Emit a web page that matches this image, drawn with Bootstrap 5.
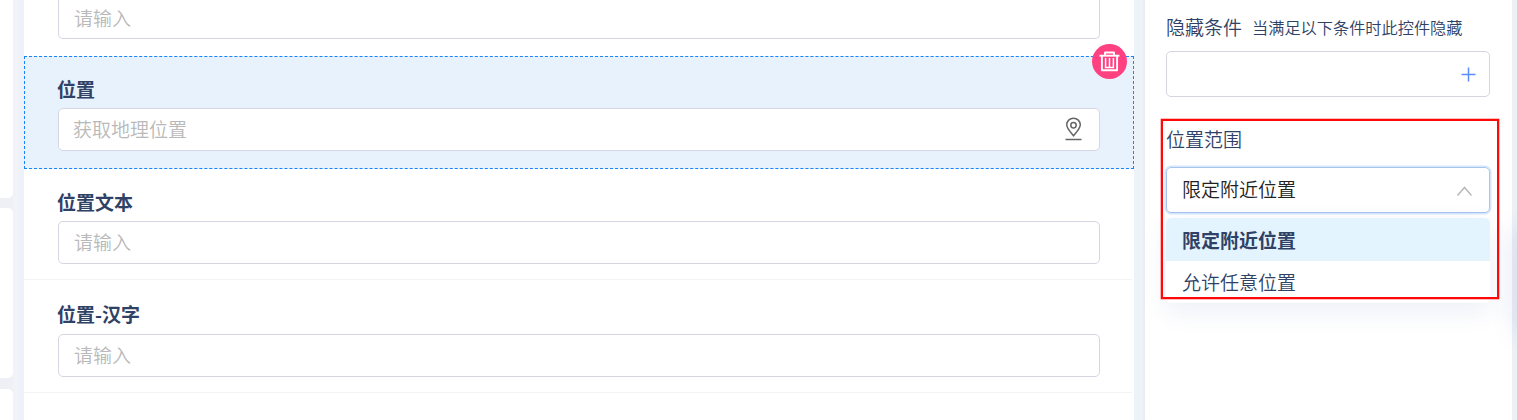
<!DOCTYPE html>
<html lang="zh-CN">
<head>
<meta charset="utf-8">
<meta name="viewport" content="width=device-width, initial-scale=1">
<title>表单设计</title>
<link href="https://cdn.jsdelivr.net/npm/bootstrap@5.3.0/dist/css/bootstrap.min.css" rel="stylesheet">
<style>
body{height:420px;overflow:hidden;background:#eef2f9;font-family:"Noto Sans CJK SC",sans-serif;font-size:19px;line-height:28px;color:#2f4266}
.palette{width:24px;gap:10px;background:linear-gradient(90deg,#eef0f5 0 13px,#f2f3f9 13px 19px,#edf2fa 19px)}
.palette div{width:13px;background:#fff;border-radius:0 5px 5px 0}
.p1{height:198px;border-top-right-radius:0!important}.p2{height:170px}.p3{height:40px;margin-top:1px}
.canvas{width:1110px}
.item{height:113px;padding:19px 34px 0}
.item-line{height:111px;margin:0 2px 2px 0;padding-right:32px;border-bottom:1px solid #f2f3f6}
.item-first{height:56px;padding-top:0}
.item-first .box{height:39px;border-top:0;border-radius:0 0 5px 5px;padding-bottom:3px}
.item-on{background:#e8f2fd;border:1px dashed #1684fc;padding:18px 33px 0}
.title{height:33px;margin-left:-1px;font-weight:700}
.item-line:last-child .title{position:static;margin-top:-1px;height:34px}
.box{height:43px;border:1px solid #d5d6e2;border-radius:5px;padding:0 16px 1px 15px;background:#fff;color:#b9b9b9;font-weight:350}
.box-place{padding-left:14px}
.del{width:35px;height:35px;top:-13px;right:6px;background:#ff4081}
.gutter{width:11px;background:linear-gradient(90deg,#eef2f9 0 7px,#e8ebf3)}
.props{width:367px;padding:13px 22px 0 21px;font-weight:350}
.hint{font-size:16.2px;margin-left:10px}
.box-add{height:46px;margin-top:10px;padding:0 13px 0 0}
.range-label{margin-top:28px}
.mark-frame{left:16px;top:119px;width:338px;height:180px;border:2px solid #ff0808;box-shadow:0 0 0 .5px #ff7777;z-index:3}
.picker{height:46px;margin-top:14px;border:1px solid #a8c5ee;border-radius:5px;box-shadow:0 0 0 1.5px #d5e7fb;padding:0 17px 2px 15px;color:#222}
.options{margin-top:5px;height:85px;border-radius:5px;box-shadow:0 8px 26px rgba(50,80,170,.09)}
.opt{height:41px;padding:0 16px}
.opt-on{height:43px;background:#e4f4fe;font-weight:700;border-radius:5px 5px 0 0}
.edge{width:5px;background:#edf0f6;position:relative}
.edge::after{content:"";position:absolute;left:5px;top:230px;width:20px;height:100px;box-shadow:0 0 26px rgba(50,80,170,.18)}
</style>
</head>
<body class="d-flex">
<aside class="palette d-flex flex-column flex-shrink-0"><div class="p1 flex-shrink-0"></div><div class="p2 flex-shrink-0"></div><div class="p3 flex-shrink-0"></div></aside>
<main class="canvas bg-white flex-shrink-0">
  <section class="item item-first"><div class="box d-flex align-items-center">请输入</div></section>
  <section class="item item-on position-relative">
    <div class="title">位置</div>
    <div class="box box-place d-flex align-items-center justify-content-between">获取地理位置
      <svg width="19" height="24" viewBox="0 0 19 24" fill="none" stroke="#666" stroke-width="1.5"><path d="M9.500 18.800C6 14.600 2.700 11.300 2.700 7.800a6.800 6.600 0 0 1 13.600 0C16.300 11.300 13 14.600 9.500 18.800Z"/><circle cx="9.500" cy="8.300" r="2.700"/><path d="M1.500 22.500h16"/></svg>
    </div>
    <div class="del position-absolute rounded-circle d-flex align-items-center justify-content-center">
      <svg width="21" height="21" viewBox="0 0 21 21" fill="none" stroke="#fff" stroke-width="1.900"><path d="M.500 4.700h20"/><path d="M6 4V1.500h9V4M2.900 5v14.200h15.200V5" stroke-linejoin="round"/><path d="M6.600 7v9.500M10.500 7v9.500M14.400 7v9.500M5.800 16.500h9.400" stroke-width="1.500"/></svg>
    </div>
  </section>
  <section class="item item-line"><div class="title">位置文本</div><div class="box d-flex align-items-center">请输入</div></section>
  <section class="item item-line"><div class="title">位置-汉字</div><div class="box d-flex align-items-center">请输入</div></section>
</main>
<div class="gutter flex-shrink-0"></div>
<aside class="props bg-white position-relative flex-shrink-0">
  <div class="d-flex align-items-center"><span>隐藏条件</span><span class="hint">当满足以下条件时此控件隐藏</span></div>
  <div class="box box-add d-flex align-items-center justify-content-end"><svg width="15" height="15" viewBox="0 0 15 15" stroke="#5b8cff" stroke-width="1.500"><path d="M.500 7.500h14M7.500.500v14"/></svg></div>
  <div class="range-label">位置范围</div>
  <div class="picker d-flex align-items-center justify-content-between">限定附近位置
    <svg class="mt-1" width="16" height="12" viewBox="0 0 16 12" fill="none" stroke="#b8b8b8" stroke-width="1.500"><path d="M1.500 10.500 8.500 2.500l7 8"/></svg>
  </div>
  <div class="options bg-white position-relative">
    <div class="opt opt-on d-flex align-items-center">限定附近位置</div>
    <div class="opt d-flex align-items-center">允许任意位置</div>
  </div>
  <div class="mark-frame position-absolute"></div>
</aside>
<div class="edge flex-shrink-0"></div>
</body>
</html>
